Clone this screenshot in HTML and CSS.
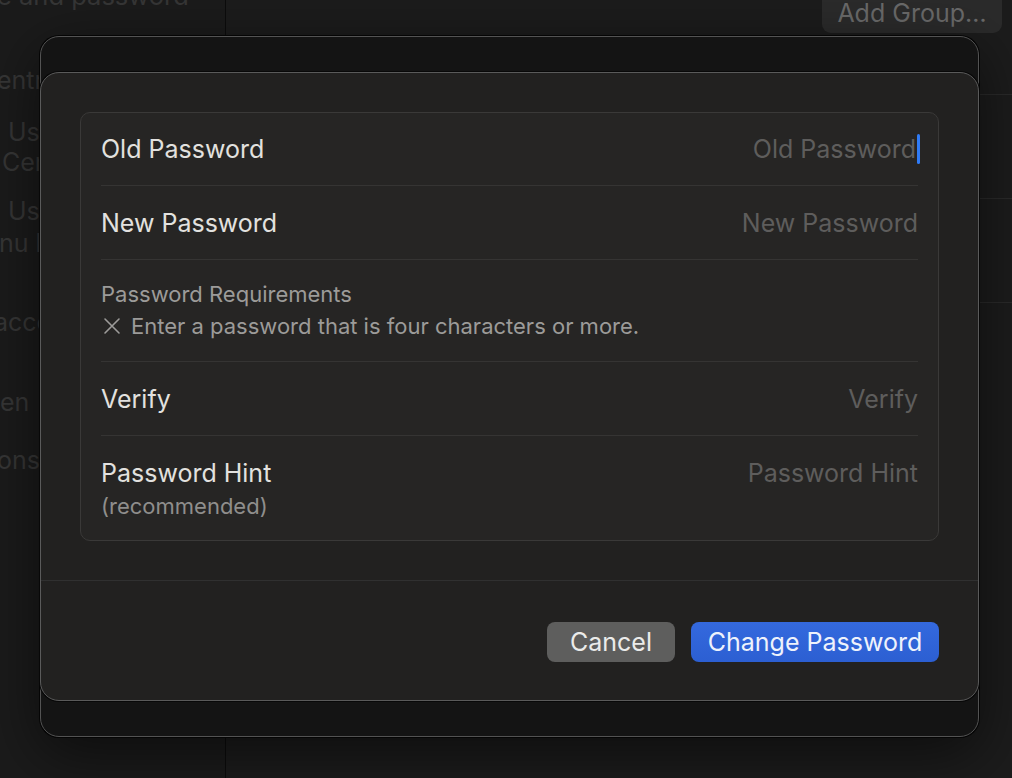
FILE: index.html
```html
<!DOCTYPE html>
<html lang="en">
<head>
<meta charset="utf-8">
<title>Change Password</title>
<link rel="stylesheet" href="styles.css">
</head>
<body>
<div class="app">
  <aside class="sidebar">
    <div class="sb-line sb-l0">e and password</div>
    <div class="sb-line sb-l1">entre</div>
    <div class="sb-line sb-l2">Use</div>
    <div class="sb-line sb-l3">Centre</div>
    <div class="sb-line sb-l4">Use</div>
    <div class="sb-line sb-l5">nu bar</div>
    <div class="sb-line sb-l6">accounts</div>
    <div class="sb-line sb-l7">en</div>
    <div class="sb-line sb-l8">ons</div>
  </aside>
  <main class="content">
    <div class="toolbar"><button class="add-btn">Add Group…</button></div>
    <div class="list">
      <div class="list-row"></div>
      <div class="list-row"></div>
      <div class="list-row"></div>
    </div>
  </main>
</div>

<div class="sheet-back"></div>

<div class="sheet">
  <div class="sheet-body">
    <div class="group">
      <div class="row row-field">
        <span class="label">Old Password</span>
        <span class="field"><span class="placeholder">Old Password</span><span class="caret"></span></span>
      </div>
      <div class="row row-field">
        <span class="label">New Password</span>
        <span class="field"><span class="placeholder">New Password</span></span>
      </div>
      <div class="row row-req">
        <div class="req-title">Password Requirements</div>
        <div class="req-item">
          <svg class="xmark" width="18" height="18" viewBox="0 0 18 18"><path d="M2 2 L16 16 M16 2 L2 16" stroke="currentColor" stroke-width="1.6" stroke-linecap="round" fill="none"/></svg>
          <span>Enter a password that is four characters or more.</span>
        </div>
      </div>
      <div class="row row-field">
        <span class="label">Verify</span>
        <span class="field"><span class="placeholder">Verify</span></span>
      </div>
      <div class="row row-hint">
        <div class="hint-left">
          <div class="label">Password Hint</div>
          <div class="sub">(recommended)</div>
        </div>
        <span class="field"><span class="placeholder">Password Hint</span></span>
      </div>
    </div>
  </div>
  <div class="sheet-footer">
    <button class="btn btn-cancel">Cancel</button>
    <button class="btn btn-primary">Change Password</button>
  </div>
</div>
</body>
</html>
```

FILE: styles.css
```css
* { box-sizing: border-box; }

html, body {
  margin: 0;
  padding: 0;
}

body {
  width: 1012px;
  height: 778px;
  overflow: hidden;
  position: relative;
  background: #1b1b1b;
  font-family: "Inter", "Noto Sans", sans-serif;
  -webkit-font-smoothing: antialiased;
}

.app {
  display: flex;
  height: 778px;
}

/* ---------- background window ---------- */
.sidebar {
  width: 226px;
  flex: none;
  background: #1b1b1b;
  border-right: 1px solid #0c0c0c;
  overflow: hidden;
  color: #363636;
  font-size: 25px;
  line-height: 30px;
  white-space: nowrap;
  display: flex;
  flex-direction: column;
}

.sb-l0 { margin-top: -19px; margin-left: -3px; font-size: 25.5px; }
.sb-l1 { margin-top: 54px; margin-left: -3px; }
.sb-l2 { margin-top: 22px; margin-left: 8px; }
.sb-l3 { margin-top: 0; margin-left: 2px; }
.sb-l4 { margin-top: 19px; margin-left: 8px; }
.sb-l5 { margin-top: 2px; margin-left: -1px; }
.sb-l6 { margin-top: 49px; margin-left: -6px; }
.sb-l7 { margin-top: 50px; margin-left: 0; }
.sb-l8 { margin-top: 28px; margin-left: -3px; }

.content {
  flex: 1;
  background: #1c1c1c;
  display: flex;
  flex-direction: column;
}

.toolbar {
  display: flex;
  justify-content: flex-end;
  padding-right: 10px;
  margin-top: -10px;
}

.add-btn {
  width: 180px;
  height: 43px;
  border: 0;
  border-radius: 9px;
  background: #2b2b2b;
  color: #6a6a6a;
  font-family: inherit;
  font-size: 25px;
  padding: 2px 0 0;
}

.list {
  margin-top: 61px;
}

.list-row {
  height: 104px;
  border-top: 1px solid #2a2a2a;
}

/* ---------- sheets ---------- */
.sheet-back {
  position: absolute;
  left: 40px;
  top: 36px;
  width: 939px;
  height: 701px;
  border-radius: 19px;
  background: #141414;
  border: 1px solid #535353;
  box-shadow: 0 0 0 1px #050505, 0 16px 60px rgba(0, 0, 0, 0.55);
}

.sheet {
  position: absolute;
  left: 40px;
  top: 72px;
  width: 939px;
  height: 629px;
  border-radius: 19px;
  background: #222120;
  border: 1px solid #5a5a5a;
  box-shadow: 0 0 0 1px #080808;
  display: flex;
  flex-direction: column;
}

.sheet-body {
  padding: 39px 39px 39px;
}

.group {
  border: 1px solid #3a3938;
  border-radius: 10px;
  background: #262524;
  padding: 0 20px;
}

.row {
  border-bottom: 1px solid #353433;
}

.row:last-child {
  border-bottom: 0;
}

.row-field {
  height: 74px;
  display: flex;
  align-items: center;
  justify-content: space-between;
}

.row-field:first-child {
  height: 73px;
}

.label {
  color: #e2e1df;
  font-size: 25px;
  line-height: 30px;
}

.field {
  display: flex;
  align-items: center;
}

.placeholder {
  color: #5e5d5c;
  font-size: 25px;
  line-height: 30px;
}

.caret {
  width: 3px;
  height: 30px;
  border-radius: 2px;
  background: #2f7bf6;
  margin-left: 1px;
  margin-right: -2px;
}

.row-req {
  height: 102px;
  padding-top: 20px;
  color: #9c9b99;
  font-size: 22px;
  line-height: 28px;
}

.req-item {
  display: flex;
  align-items: center;
  gap: 10px;
  margin-top: 4px;
}

.xmark {
  margin-left: 2px;
  color: #9c9b99;
  flex: none;
}

.row-hint {
  height: 104px;
  padding-top: 22px;
  display: flex;
  justify-content: space-between;
  align-items: flex-start;
}

.sub {
  color: #8f8e8c;
  font-size: 22px;
  line-height: 28px;
  margin-top: 4px;
}

.sheet-footer {
  border-top: 1px solid #303030;
  padding: 41px 39px 0 0;
  display: flex;
  justify-content: flex-end;
  gap: 16px;
}

.btn {
  height: 40px;
  border: 0;
  border-radius: 8px;
  font-family: inherit;
  font-size: 25px;
  line-height: 40px;
  padding: 0;
  text-align: center;
}

.btn-cancel {
  width: 128px;
  background: #5e5e5d;
  color: #ebebea;
}

.btn-primary {
  width: 248px;
  background: linear-gradient(#3469de, #2c5fd2);
  color: #eef2fc;
}
```
